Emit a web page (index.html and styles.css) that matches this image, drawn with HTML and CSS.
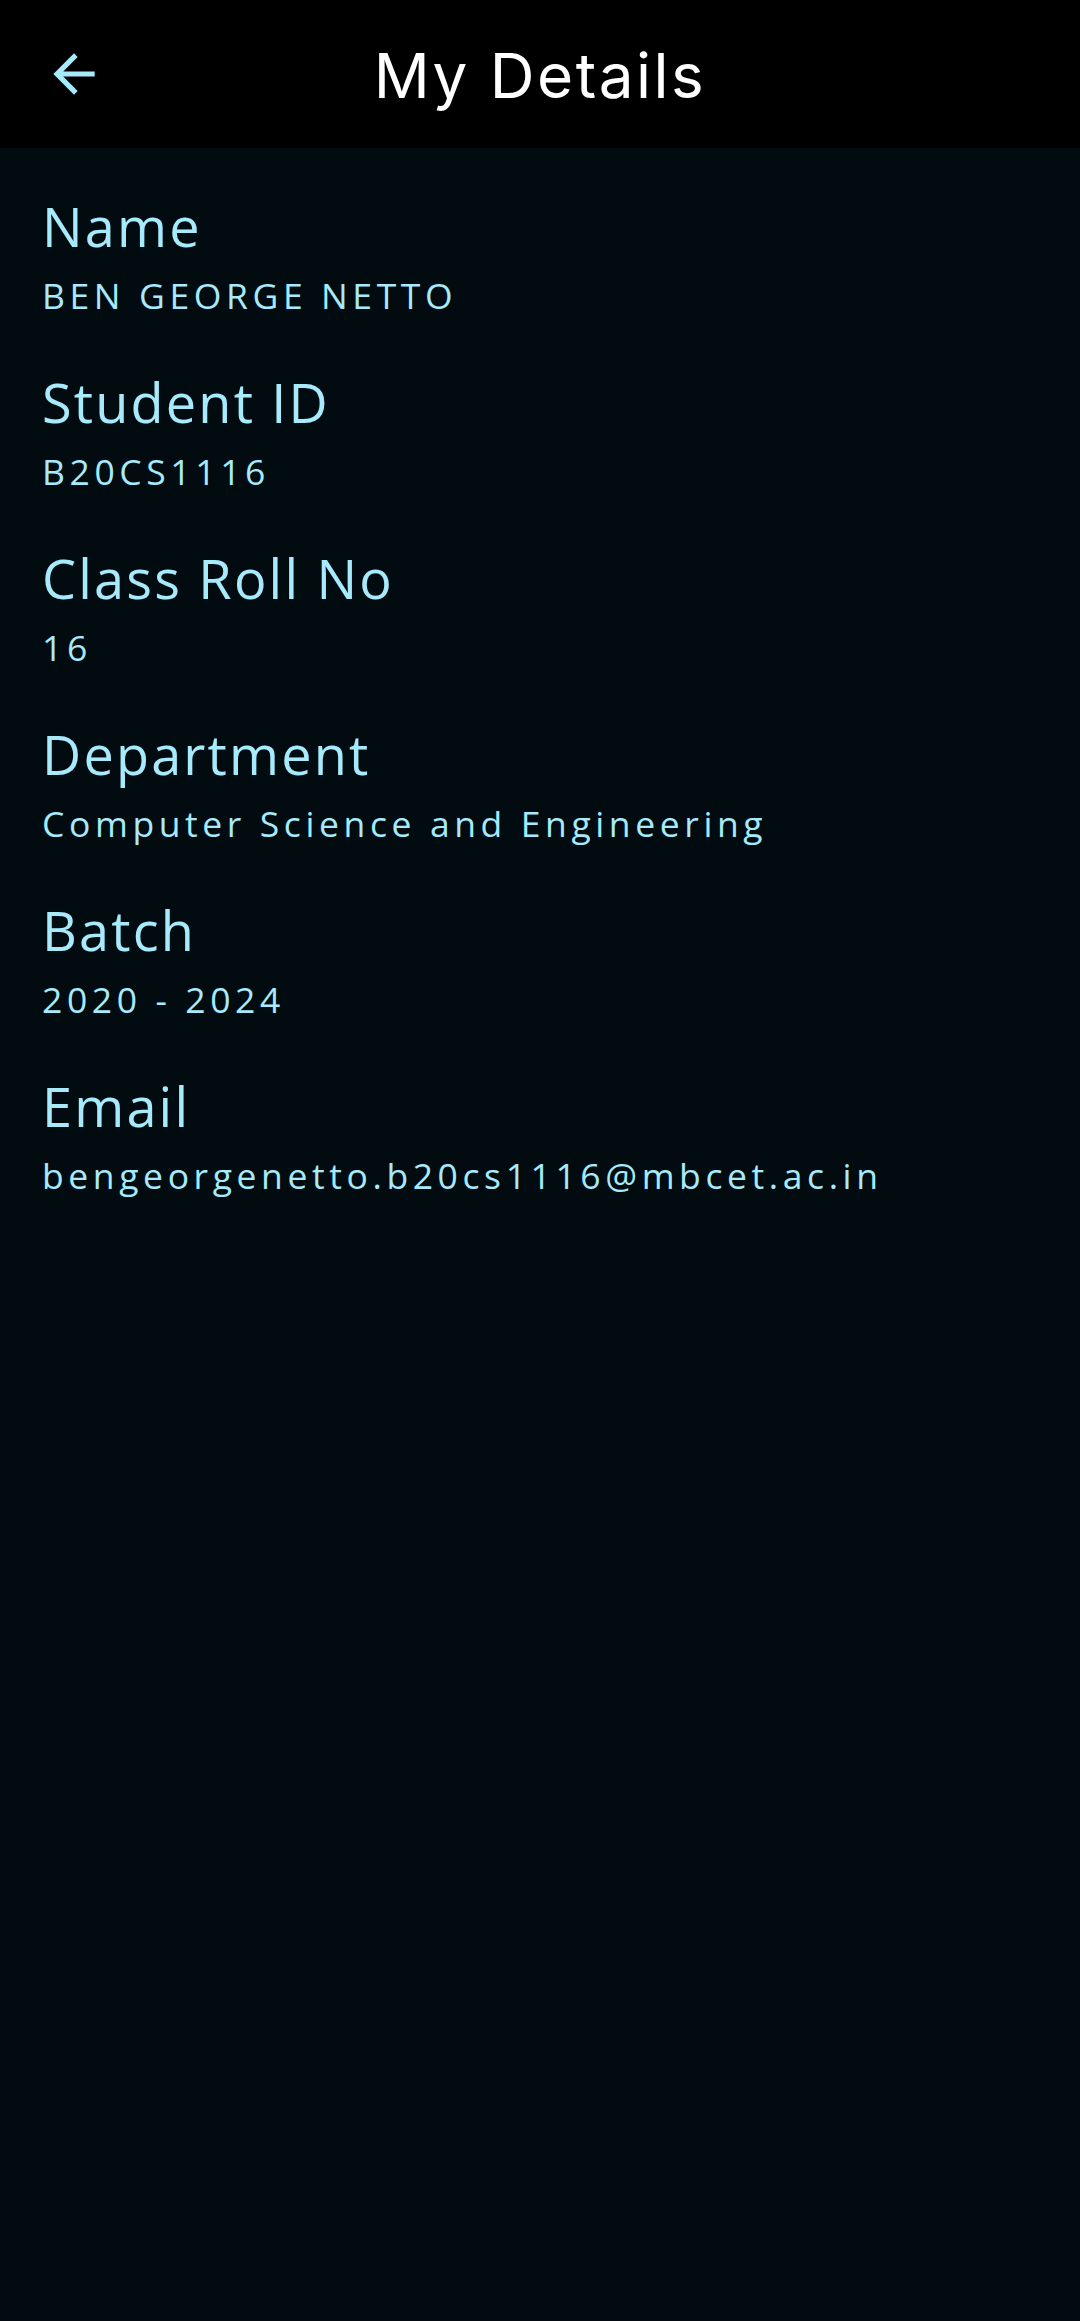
FILE: index.html
```html
<!DOCTYPE html>
<html>
<head>
<meta charset="utf-8">
<link rel="stylesheet" href="styles.css">
</head>
<body>
<div class="app">
  <header class="topbar">
    <button class="back" aria-label="Back">
      <svg viewBox="0 0 24 24" width="62" height="62"><path d="M20 11H7.83l5.59-5.59L12 4l-8 8 8 8 1.41-1.41L7.83 13H20v-2z" fill="currentColor"/></svg>
    </button>
    <h1 class="title">My Details</h1>
  </header>
  <main class="details">
    <div class="field"><div class="label">Name</div><div class="value">BEN GEORGE NETTO</div></div>
    <div class="field"><div class="label">Student ID</div><div class="value">B20CS1116</div></div>
    <div class="field"><div class="label">Class Roll No</div><div class="value">16</div></div>
    <div class="field"><div class="label">Department</div><div class="value">Computer Science and Engineering</div></div>
    <div class="field"><div class="label">Batch</div><div class="value">2020 - 2024</div></div>
    <div class="field"><div class="label">Email</div><div class="value">bengeorgenetto.b20cs1116@mbcet.ac.in</div></div>
  </main>
</div>
</body>
</html>
```

FILE: styles.css
```css
html, body {
  margin: 0;
  padding: 0;
  background: #020c10;
}
.app {
  width: 1080px;
  min-height: 2321px;
  background: #020c10;
  display: flex;
  flex-direction: column;
}
.topbar {
  height: 148px;
  background: #000000;
  display: flex;
  align-items: center;
  justify-content: center;
  position: relative;
}
.back {
  position: absolute;
  left: 43px;
  top: 43px;
  width: 62px;
  height: 62px;
  padding: 0;
  border: 0;
  background: transparent;
  color: #a6eafc;
  display: flex;
}
.title {
  margin: 0;
  font-family: Inter, "Noto Sans", sans-serif;
  font-weight: 400;
  font-size: 62px;
  letter-spacing: 2.5px;
  color: #ffffff;
  line-height: 1;
  padding-top: 4px;
}
.details {
  display: flex;
  flex-direction: column;
  gap: 46px;
  padding: 41px 42px 0 42px;
}
.field {
  display: flex;
  flex-direction: column;
  gap: 8px;
  font-family: "Open Sans", sans-serif;
  color: #a6eafc;
}
.label {
  font-size: 54px;
  line-height: 74px;
  letter-spacing: 2.2px;
}
.value {
  font-size: 35.5px;
  line-height: 48px;
  letter-spacing: 4.6px;
}
```
